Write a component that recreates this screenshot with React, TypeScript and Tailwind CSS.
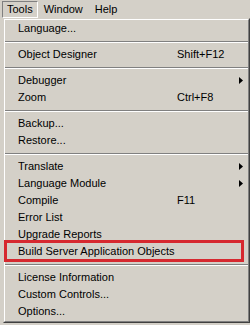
type Entry =
  | { sep: true }
  | { sep?: false; label: string; shortcut?: string; sub?: boolean; marked?: boolean }

const entries: Entry[] = [
  { label: 'Language...' },
  { sep: true },
  { label: 'Object Designer', shortcut: 'Shift+F12' },
  { sep: true },
  { label: 'Debugger', sub: true },
  { label: 'Zoom', shortcut: 'Ctrl+F8' },
  { sep: true },
  { label: 'Backup...' },
  { label: 'Restore...' },
  { sep: true },
  { label: 'Translate', sub: true },
  { label: 'Language Module', sub: true },
  { label: 'Compile', shortcut: 'F11' },
  { label: 'Error List' },
  { label: 'Upgrade Reports' },
  { label: 'Build Server Application Objects', marked: true },
  { sep: true },
  { label: 'License Information' },
  { label: 'Custom Controls...' },
  { label: 'Options...' },
]

function Arrow() {
  return (
    <svg width="4" height="7" viewBox="0 0 4 7" className="fill-black">
      <path d="M0 0L4 3.5L0 7Z" />
    </svg>
  )
}

export default function App() {
  return (
    <div
      className="w-[250px] h-[325px] overflow-hidden bg-[#d4d0c8] text-[11px] text-black leading-none"
      style={{ fontFamily: '"Liberation Sans", Arial, sans-serif' }}
    >
      {/* menu bar */}
      <div className="flex h-[18px] items-start">
        <div className="ml-[2px] mt-[1px] h-[17px] px-[4px] flex items-center border border-t-[#808080] border-l-[#808080] border-b-white border-r-white">
          Tools
        </div>
        <div className="mt-[1px] h-[17px] px-[6px] flex items-center">Window</div>
        <div className="mt-[1px] h-[17px] px-[6px] flex items-center">Help</div>
      </div>

      {/* dropdown */}
      <div className="ml-[3px] w-[247px] border border-t-[#d4d0c8] border-l-[#d4d0c8] border-r-[#404040] border-b-[#404040]">
        <div className="border border-t-white border-l-white border-r-[#808080] border-b-[#808080] pb-[1px]">
          {entries.map((e, i) =>
            e.sep ? (
              <div key={i} className="h-[9px] pt-[4px]">
                <div className="h-px bg-[#808080]" />
                <div className="h-px bg-white" />
              </div>
            ) : (
              <div key={i} className="relative h-[17px] flex items-center pl-[13px] pr-[5px]">
                <span className="w-[159px] shrink-0 whitespace-nowrap">{e.label}</span>
                <span className="flex-1 whitespace-nowrap">{e.shortcut}</span>
                {e.sub && <Arrow />}
                {e.marked && (
                  <div className="absolute top-[-3px] bottom-[-2px] left-[-1px] right-[4px] border-[3px] border-[#d6282f]" />
                )}
              </div>
            )
          )}
        </div>
      </div>
    </div>
  )
}
